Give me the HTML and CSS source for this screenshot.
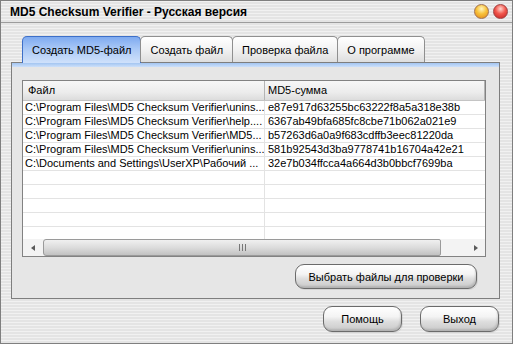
FILE: index.html
```html
<!DOCTYPE html>
<html lang="ru">
<head>
    <meta charset="UTF-8">
    <title>MD5 Checksum Verifier - Русская версия</title>
    <link rel="stylesheet" href="styles.css">
</head>
<body>
    <div class="window">
        <div class="titlebar">
            <span class="title">MD5 Checksum Verifier - Русская версия</span>
            <div class="caption-btns">
                <span class="dot dot-min"></span>
                <span class="dot dot-close"></span>
            </div>
        </div>

        <div class="content">
            <div class="tabs">
                <div class="tab active">Создать MD5-файл</div>
                <div class="tab">Создать файл</div>
                <div class="tab">Проверка файла</div>
                <div class="tab">О программе</div>
            </div>

            <div class="panel">
                <div class="list">
                    <div class="list-head">
                        <div class="cell">Файл</div>
                        <div class="cell">MD5-сумма</div>
                    </div>
                    <div class="list-body">
                        <div class="row"><div class="cell">C:\Program Files\MD5 Checksum Verifier\unins...</div><div class="cell">e87e917d63255bc63222f8a5a318e38b</div></div>
                        <div class="row"><div class="cell">C:\Program Files\MD5 Checksum Verifier\help....</div><div class="cell">6367ab49bfa685fc8cbe71b062a021e9</div></div>
                        <div class="row"><div class="cell">C:\Program Files\MD5 Checksum Verifier\MD5...</div><div class="cell">b57263d6a0a9f683cdffb3eec81220da</div></div>
                        <div class="row"><div class="cell">C:\Program Files\MD5 Checksum Verifier\unins...</div><div class="cell">581b92543d3ba9778741b16704a42e21</div></div>
                        <div class="row"><div class="cell">C:\Documents and Settings\UserXP\Рабочий ...</div><div class="cell">32e7b034ffcca4a664d3b0bbcf7699ba</div></div>
                        <div class="row"><div class="cell"></div><div class="cell"></div></div>
                        <div class="row"><div class="cell"></div><div class="cell"></div></div>
                        <div class="row"><div class="cell"></div><div class="cell"></div></div>
                        <div class="row"><div class="cell"></div><div class="cell"></div></div>
                        <div class="row"><div class="cell"></div><div class="cell"></div></div>
                    </div>
                    <div class="hscroll">
                        <div class="sb-btn"><span class="arrow-left"></span></div>
                        <div class="sb-thumb"><span class="grip"></span></div>
                        <div class="sb-rest"><span class="arrow-right"></span></div>
                    </div>
                </div>

                <div class="panel-actions">
                    <button class="btn btn-wide">Выбрать файлы для проверки</button>
                </div>
            </div>

            <div class="footer">
                <button class="btn">Помощь</button>
                <button class="btn">Выход</button>
            </div>
        </div>
    </div>
</body>
</html>
```

FILE: styles.css
```css
* {
    box-sizing: border-box;
}
body {
    margin: 0;
    font-family: "Liberation Sans", Arial, sans-serif;
    font-size: 11px;
    color: #000;
    background: #fff;
}
.window {
    width: 513px;
    height: 344px;
    border: 1px solid #7f7f7f;
    background: repeating-linear-gradient(180deg, #f1f1f1 0 1px, #e4e4e4 1px 3px);
    display: flex;
    flex-direction: column;
}
.titlebar {
    height: 22px;
    border-bottom: 1px solid #9c9c9c;
    display: flex;
    align-items: center;
    justify-content: space-between;
    padding: 0 4px 0 9px;
}
.title {
    font-weight: bold;
    font-size: 12px;
}
.caption-btns {
    display: flex;
    gap: 4px;
}
.dot {
    width: 15px;
    height: 15px;
    border-radius: 50%;
    border: 1px solid #a07050;
}
.dot-min {
    background: radial-gradient(circle at 50% 30%, #fff6c0 0, #f8c23a 45%, #e0861a 100%);
}
.dot-close {
    border-color: #a04040;
    background: radial-gradient(circle at 50% 30%, #ffd6cf 0, #f2574d 45%, #c02020 100%);
}

.content {
    flex: 1;
    display: flex;
    flex-direction: column;
    padding: 13px 12px 0 10px;
}
.tabs {
    display: flex;
    height: 26px;
    padding-left: 11px;
    position: relative;
    z-index: 1;
}
.tab {
    padding: 0 9px;
    line-height: 27px;
    border: 1px solid #8f8f8f;
    border-bottom: none;
    border-radius: 5px 5px 0 0;
    background: linear-gradient(#ffffff, #f2f2f2 50%, #dedede);
    margin-right: -1px;
}
.tab.active {
    border-color: #3d6fc8;
    background: linear-gradient(#7eaaf0, #a9c8f6 45%, #cfe1fb);
    height: 27px;
}

.panel {
    border: 1px solid #7e7e7e;
    background: linear-gradient(#a3c5f1, #cde0fa) top / 100% 4px no-repeat, #e6e6e6;
    padding: 17px 13px 9px 10px;
}
.list {
    border: 1px solid #828282;
    background: #fff;
}
.list-head,
.row {
    display: grid;
    grid-template-columns: 242px 1fr;
}
.list-head {
    height: 20px;
    line-height: 19px;
    border-bottom: 1px solid #c4c4c4;
    background: linear-gradient(#f7f7f7, #ececec 60%, #dcdcdc);
}
.list-head .cell {
    padding-left: 3px;
    border-right: 1px solid #b4b4b4;
}
.list-head .cell:first-child {
    padding-left: 5px;
}
.list-body {
    height: 138px;
    overflow: hidden;
}
.row {
    height: 14px;
    line-height: 13px;
    border-bottom: 1px solid #e3e3e3;
}
.row .cell {
    padding-left: 3px;
    white-space: nowrap;
    overflow: hidden;
}
.row .cell:first-child {
    padding-left: 2px;
    border-right: 1px solid #e3e3e3;
}

.hscroll {
    height: 17px;
    display: flex;
    background: #f3f3f3;
}
.sb-btn {
    width: 20px;
    display: flex;
    align-items: center;
    padding-left: 8px;
}
.arrow-left {
    border-style: solid;
    border-width: 3px 4px 3px 0;
    border-color: transparent #5a5a5a transparent transparent;
}
.arrow-right {
    border-style: solid;
    border-width: 3px 0 3px 4px;
    border-color: transparent transparent transparent #5a5a5a;
}
.sb-thumb {
    width: 398px;
    border: 1px solid #9a9a9a;
    border-radius: 3px 2px 2px 3px;
    background: linear-gradient(#f0f0f0, #dcdcdc 50%, #c2c2c2);
    display: flex;
    align-items: center;
    justify-content: center;
}
.grip {
    width: 7px;
    height: 7px;
    background: repeating-linear-gradient(90deg, #777 0 1px, transparent 1px 3px);
}
.sb-rest {
    flex: 1;
    display: flex;
    align-items: center;
    justify-content: flex-end;
    padding-right: 7px;
}

.panel-actions {
    display: flex;
    justify-content: flex-end;
    padding: 7px 9px 0 0;
}
.btn {
    font-family: inherit;
    font-size: 11px;
    color: #000;
    height: 26px;
    border: 1px solid #6b6b6b;
    border-radius: 9px;
    background: linear-gradient(#ffffff, #f4f4f4 40%, #dedede 60%, #c9c9c9);
    box-shadow: inset -1px -2px 2px rgba(0, 0, 0, 0.12), 1px 1px 0 rgba(0, 0, 0, 0.08);
    padding: 0;
}
.btn-wide {
    width: 182px;
    height: 25px;
}
.footer {
    display: flex;
    justify-content: flex-end;
    gap: 18px;
    padding: 7px 1px 0 0;
}
.footer .btn {
    width: 79px;
}
```
